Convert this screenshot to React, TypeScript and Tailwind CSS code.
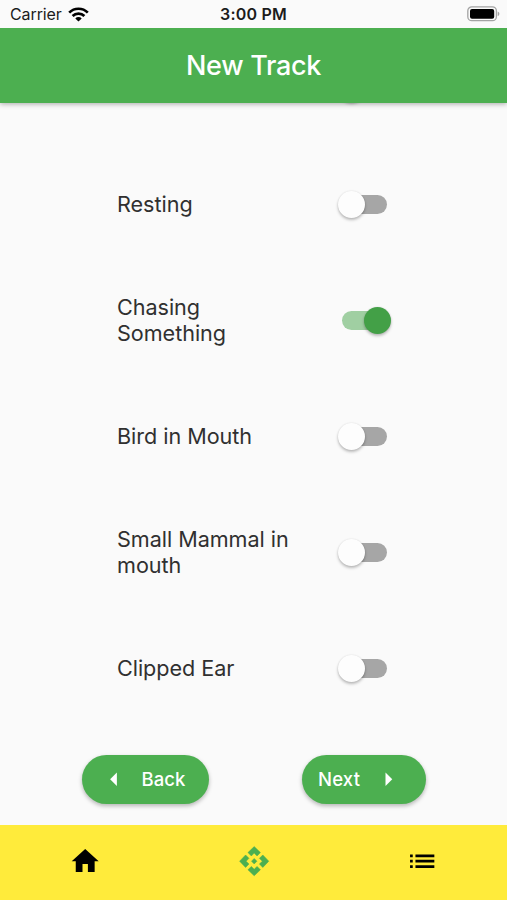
import { useState } from "react";
import { MdArrowLeft, MdArrowRight, MdHome, MdList } from "react-icons/md";

function StatusBar() {
  return (
    <div className="relative z-20 grid h-[27.5px] shrink-0 grid-cols-3 items-center bg-[#fafafa] pt-[2px] text-[#1c1c1c]">
      <div className="flex items-center pl-[10px]">
        <span className="-mt-px text-[16px] leading-5 tracking-[-0.1px]">Carrier</span>
        <svg className="-mt-px ml-[6px] h-[15px] w-[21px]" viewBox="0 0 21 15" fill="none" stroke="#000" strokeWidth="2.7">
          <path d="M1.2 5.6a13.2 13.2 0 0 1 18.6 0" />
          <path d="M4.6 9a8.4 8.4 0 0 1 11.8 0" />
          <path d="M10.5 14.6 7.3 11.4a4.5 4.5 0 0 1 6.4 0z" fill="#000" stroke="none" />
        </svg>
      </div>
      <div className="-mt-px text-center text-[16px] leading-5 font-semibold tracking-[0.2px] whitespace-nowrap">3:00 PM</div>
      <div className="flex justify-end pr-[7px]">
        <svg className="-mt-[2px] h-[16px] w-[34px]" viewBox="0 0 34 16">
          <rect x="1.8" y="0.9" width="28.6" height="13.8" rx="4" fill="none" stroke="#a3a3a3" strokeWidth="1.3" />
          <rect x="4" y="2.9" width="24.2" height="9.8" rx="2" fill="#000" />
          <path d="M31.7 5.5c2.2.8 2.2 3.8 0 4.6z" fill="#a3a3a3" />
        </svg>
      </div>
    </div>
  );
}

function Toggle({ on, onChange }: { on: boolean; onChange?: () => void }) {
  return (
    <button
      role="switch"
      aria-checked={on}
      onClick={onChange}
      className={`flex h-[19px] w-[45px] shrink-0 items-center rounded-full ${on ? "justify-end bg-[#a0cfa2]" : "justify-start bg-[#a6a6a6]"}`}
    >
      <span
        className={`size-[27px] shrink-0 rounded-full shadow-[0_2px_3px_rgba(0,0,0,0.25),0_0_2px_rgba(0,0,0,0.1)] ${on ? "-mr-[4px] bg-[#43a047]" : "-ml-[4px] bg-[#fdfdfd]"}`}
      />
    </button>
  );
}

function TrackIcon() {
  return (
    <svg viewBox="0 0 24 24" className="size-[32.4px]" fill="#4caf50" stroke="#4caf50" strokeWidth="0.4" strokeLinejoin="round">
      <path d="M14 12l-2 2-2-2 2-2z" />
      <path d="M12 6l2.12 2.12 2.5-2.5L12 1.2 7.38 5.62l2.5 2.5z" />
      <path d="M6 12l2.12-2.12-2.5-2.5L1.2 12l4.42 4.62 2.5-2.5z" />
      <path d="M18 12l-2.12 2.12 2.5 2.5L22.8 12l-4.42-4.62-2.5 2.5z" />
      <path d="M12 18l-2.12-2.12-2.5 2.5L12 22.8l4.62-4.42-2.5-2.5z" />
    </svg>
  );
}

const initialRows = [
  { label: "Resting", on: false },
  { label: "Chasing Something", on: true },
  { label: "Bird in Mouth", on: false },
  { label: "Small Mammal in mouth", on: false },
  { label: "Clipped Ear", on: false },
];

const buttonClass =
  "flex h-[49px] items-center rounded-full bg-[#4caf50] text-[18.5px] font-medium text-white shadow-[0_2px_4px_rgba(0,0,0,0.28)]";

export default function App() {
  const [rows, setRows] = useState(initialRows);
  const flip = (index: number) =>
    setRows(rows.map((row, i) => (i === index ? { ...row, on: !row.on } : row)));

  return (
    <div className="flex h-[900px] w-[507px] flex-col overflow-hidden bg-[#fafafa] font-['Inter',sans-serif]">
      <StatusBar />
      <header className="relative z-10 flex h-[75.5px] shrink-0 items-center justify-center bg-[#4caf50] pt-[1.5px] shadow-[0_1px_5px_rgba(0,0,0,0.33)]">
        <h1 className="text-[27px] font-medium tracking-[-0.3px] text-white">New Track</h1>
      </header>
      <main className="flex flex-1 flex-col">
        {/* The row scrolled under the header: only its thumb shadow peeks out. */}
        <div className="-mt-[24px] mb-[48px] flex h-[19px] shrink-0 pl-[342px]">
          <Toggle on={false} />
        </div>
        {rows.map((row, i) => (
          <div key={row.label} className="flex h-[116px] shrink-0 items-center pl-[117px]">
            <div className="w-[175px] pb-px text-[21.6px] leading-[26px] tracking-[-0.04px] text-[#303030]">
              <div className={row.label === "Chasing Something" ? "w-[130px]" : ""}>{row.label}</div>
            </div>
            <div className="ml-[50px] flex">
              <Toggle on={row.on} onChange={() => flip(i)} />
            </div>
          </div>
        ))}
        <div className="mt-[29px] flex pl-[82px]">
          <button className={`${buttonClass} w-[127px] pl-[16px]`}>
            <MdArrowLeft size={32.4} />
            <span className="ml-[11px] tracking-[0.1px]">Back</span>
          </button>
          <button className={`${buttonClass} ml-[93px] w-[124px] pl-[16px]`}>
            <span className="w-[53.5px] text-left tracking-[0.2px]">Next</span>
            <MdArrowRight size={32.4} />
          </button>
        </div>
      </main>
      <nav className="grid h-[75px] shrink-0 grid-cols-3 justify-items-center bg-[#ffeb3b] pt-[19.5px] pl-[1px] text-black">
        <MdHome size={32.4} />
        <TrackIcon />
        <MdList size={32.4} />
      </nav>
    </div>
  );
}
